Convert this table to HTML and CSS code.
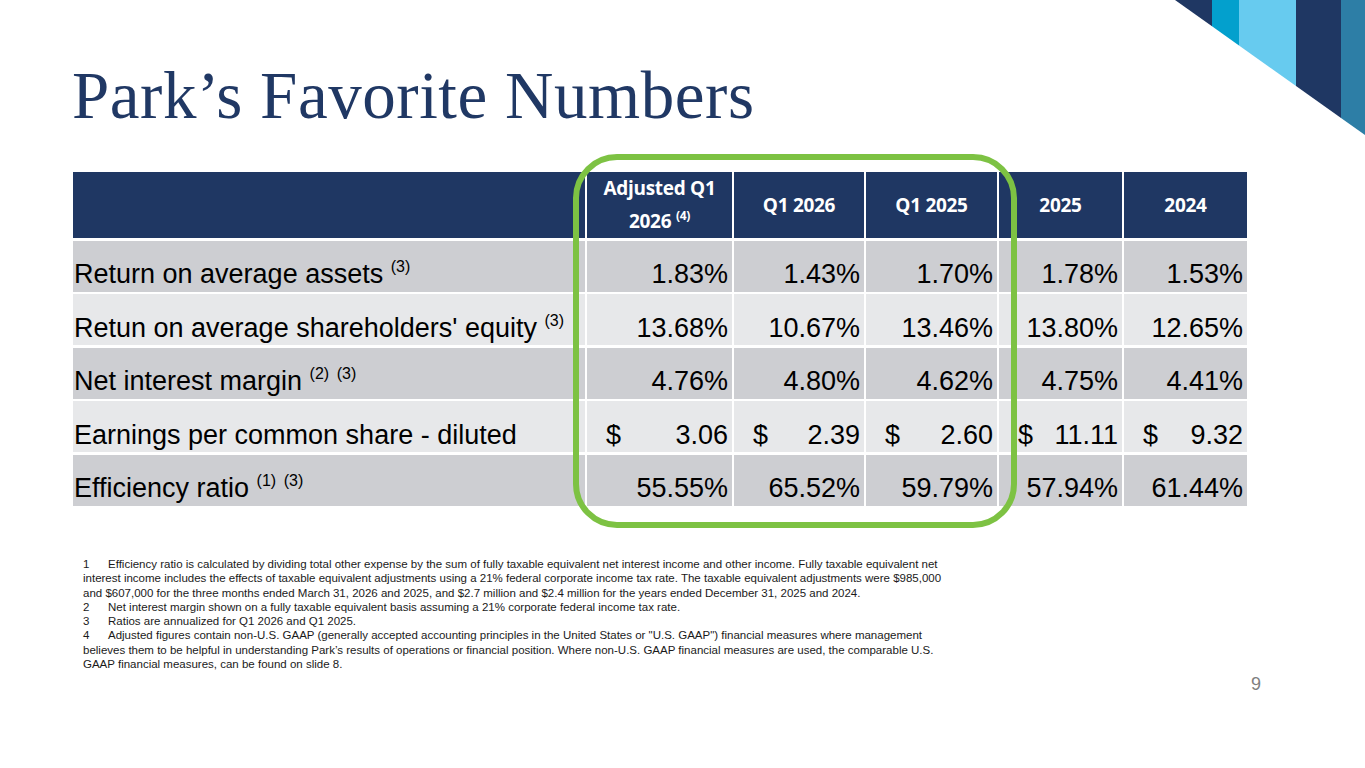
FILE: index.html
```html
<!DOCTYPE html>
<html lang="en">
<head>
<meta charset="utf-8">
<title>Park's Favorite Numbers</title>
<link rel="stylesheet" href="styles.css">
</head>
<body>
<div class="slide">
  <svg class="corner" width="215" height="140" viewBox="0 0 215 140" aria-hidden="true">
    <polygon points="25,0 62,0 62,26.3" fill="#1f3763"/>
    <polygon points="62,0 89,0 89,45.5 62,26.3" fill="#03a0cd"/>
    <polygon points="89,0 146,0 146,86 89,45.5" fill="#67cbef"/>
    <polygon points="146,0 191,0 191,118 146,86" fill="#1f3763"/>
    <polygon points="191,0 215,0 215,135 191,118" fill="#2d7ea6"/>
  </svg>

  <h1 class="title">Park’s Favorite Numbers</h1>

  <div class="table">
    <div class="row head">
      <div class="cell hcell"></div>
      <div class="cell hcell"><span>Adjusted Q1<br>2026 <sup class="hsup">(4)</sup></span></div>
      <div class="cell hcell"><span>Q1 2026</span></div>
      <div class="cell hcell"><span>Q1 2025</span></div>
      <div class="cell hcell"><span>2025</span></div>
      <div class="cell hcell"><span>2024</span></div>
    </div>
    <div class="row dark">
      <div class="cell label"><span>Return on average assets <sup class="sup">(3)</sup></span></div>
      <div class="cell num">1.83%</div>
      <div class="cell num">1.43%</div>
      <div class="cell num">1.70%</div>
      <div class="cell num">1.78%</div>
      <div class="cell num">1.53%</div>
    </div>
    <div class="row light">
      <div class="cell label"><span>Retun on average shareholders' equity <sup class="sup">(3)</sup></span></div>
      <div class="cell num">13.68%</div>
      <div class="cell num">10.67%</div>
      <div class="cell num">13.46%</div>
      <div class="cell num">13.80%</div>
      <div class="cell num">12.65%</div>
    </div>
    <div class="row dark">
      <div class="cell label"><span>Net interest margin <sup class="sup">(2)</sup> <sup class="sup">(3)</sup></span></div>
      <div class="cell num">4.76%</div>
      <div class="cell num">4.80%</div>
      <div class="cell num">4.62%</div>
      <div class="cell num">4.75%</div>
      <div class="cell num">4.41%</div>
    </div>
    <div class="row light">
      <div class="cell label"><span>Earnings per common share - diluted</span></div>
      <div class="cell num money"><span>$</span><span>3.06</span></div>
      <div class="cell num money"><span>$</span><span>2.39</span></div>
      <div class="cell num money"><span>$</span><span>2.60</span></div>
      <div class="cell num money"><span>$</span><span>11.11</span></div>
      <div class="cell num money"><span>$</span><span>9.32</span></div>
    </div>
    <div class="row dark">
      <div class="cell label"><span>Efficiency ratio <sup class="sup">(1)</sup> <sup class="sup">(3)</sup></span></div>
      <div class="cell num">55.55%</div>
      <div class="cell num">65.52%</div>
      <div class="cell num">59.79%</div>
      <div class="cell num">57.94%</div>
      <div class="cell num">61.44%</div>
    </div>
  </div>

  <div class="highlight" aria-hidden="true"></div>

  <div class="notes">
    <p><span class="n">1</span>Efficiency ratio is calculated by dividing total other expense by the sum of fully taxable equivalent net interest income and other income. Fully taxable equivalent net<br>interest income includes the effects of taxable equivalent adjustments using a 21% federal corporate income tax rate. The taxable equivalent adjustments were $985,000<br>and $607,000 for the three months ended March 31, 2026 and 2025, and $2.7 million and $2.4 million for the years ended December 31, 2025 and 2024.</p>
    <p><span class="n">2</span>Net interest margin shown on a fully taxable equivalent basis assuming a 21% corporate federal income tax rate.</p>
    <p><span class="n">3</span>Ratios are annualized for Q1 2026 and Q1 2025.</p>
    <p><span class="n">4</span>Adjusted figures contain non-U.S. GAAP (generally accepted accounting principles in the United States or "U.S. GAAP") financial measures where management<br>believes them to be helpful in understanding Park’s results of operations or financial position. Where non-U.S. GAAP financial measures are used, the comparable U.S.<br>GAAP financial measures, can be found on slide 8.</p>
  </div>

  <div class="pagenum">9</div>
</div>
</body>
</html>
```

FILE: styles.css
```css
* { box-sizing: border-box; }

html, body {
  margin: 0;
  padding: 0;
  background: #ffffff;
}

.slide {
  position: relative;
  width: 1365px;
  height: 768px;
  overflow: hidden;
  background: #ffffff;
  font-family: "Liberation Sans", Arial, sans-serif;
  color: #000;
  padding: 57px 0 0 73px;
}

.corner {
  position: absolute;
  top: 0;
  right: 0;
  display: block;
}

.title {
  margin: 0 0 38px -1px;
  font-family: "Liberation Serif", "Times New Roman", serif;
  font-weight: normal;
  font-size: 67px;
  line-height: 77px;
  color: #203864;
  letter-spacing: 0.55px;
}

.table {
  width: 1174px;
  display: flex;
  flex-direction: column;
  row-gap: 2.6px;
}

.row {
  display: grid;
  grid-template-columns: 512px 145px 130px 131px 123px 123px;
  column-gap: 2px;
  height: 51px;
}

.row.head {
  height: 66px;
}

.cell {
  display: flex;
  min-width: 0;
}

.hcell {
  background: #1f3763;
  color: #ffffff;
  font-family: "Open Sans", "Noto Sans", sans-serif;
  font-weight: 700;
  font-size: 19px;
  line-height: 33px;
  align-items: center;
  justify-content: center;
  text-align: center;
  letter-spacing: -0.3px;
}

.hsup {
  font-size: 12px;
  line-height: 0;
  vertical-align: 8px;
}

.row.dark .cell { background: #cdced2; }
.row.light .cell { background: #e7e8ea; }

.label,
.num {
  font-size: 27px;
  line-height: 31px;
  align-items: flex-end;
  padding-bottom: 1.5px;
  white-space: nowrap;
}

.label {
  justify-content: flex-start;
  padding-left: 1px;
}

.num {
  justify-content: flex-end;
  padding-right: 4px;
}

.num.money {
  justify-content: space-between;
  padding-left: 19px;
}

.sup {
  font-size: 16px;
  line-height: 0;
  vertical-align: 11px;
}

.highlight {
  position: absolute;
  left: 573px;
  top: 154px;
  width: 444px;
  height: 374px;
  border: 6px solid #7dc243;
  border-radius: 44px;
}

.notes {
  margin: 51px 0 0 10px;
  font-size: 11.5px;
  line-height: 14.3px;
  color: #1a1a1a;
  white-space: nowrap;
}

.notes p {
  margin: 0;
}

.notes .n {
  display: inline-block;
  width: 25px;
}

.pagenum {
  text-align: right;
  padding-right: 104px;
  margin-top: 3px;
  font-size: 18px;
  line-height: 21px;
  color: #7f7f7f;
}
```
